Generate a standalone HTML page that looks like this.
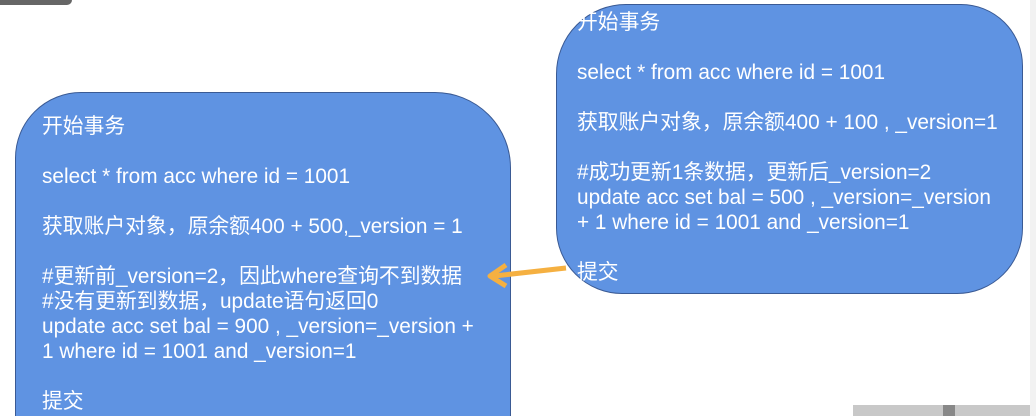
<!DOCTYPE html>
<html><head><meta charset="utf-8"><style>
html,body{margin:0;padding:0;width:1036px;height:416px;overflow:hidden;background:#fff;position:relative;font-family:"Liberation Sans","Noto Sans CJK SC",sans-serif;}
.box{position:absolute;background:#5f93e2;border:1px solid #3a5a94;color:#fff;box-sizing:border-box;}
.t{position:absolute;font-size:20.8px;line-height:25px;white-space:pre;color:#fff;}
</style></head><body>
<div style="position:absolute;left:0;top:0;width:72px;height:5px;background:#666;border-radius:0 0 8px 0"></div>
<div class="box" style="left:556px;top:4px;width:467px;height:290px;border-radius:70px 62px 66px 66px;"></div>
<div class="box" style="left:15px;top:92px;width:496px;height:340px;border-radius:66px 76px 0 0;"></div>
<div class="t" style="left:577px;top:10px">开始事务

select * from acc where id = 1001

获取账户对象，原余额400 + 100 , _version=1

#成功更新1条数据，更新后_version=2
update acc set bal = 500 , _version=_version
+ 1 where id = 1001 and _version=1

提交</div>
<div class="t" style="left:42px;top:114px">开始事务

select * from acc where id = 1001

获取账户对象，原余额400 + 500,_version = 1

#更新前_version=2，因此where查询不到数据
#没有更新到数据，update语句返回0
update acc set bal = 900 , _version=_version +
1 where id = 1001 and _version=1

提交</div>
<svg style="position:absolute;left:480px;top:258px" width="90" height="30">
<path d="M86 10 L14 18" stroke="#f5b041" stroke-width="5" fill="none"/>
<path d="M26 7 L10 18 L26 28" stroke="#f5b041" stroke-width="5" fill="none" stroke-linejoin="round"/>
</svg>
<div style="position:absolute;left:853px;top:405px;width:183px;height:11px;background:#c8c8c8"></div>
<div style="position:absolute;left:943px;top:405px;width:12px;height:11px;background:#888"></div>
<div style="position:absolute;left:1030px;top:0;width:6px;height:416px;background:#f2f2f2"></div>
</body></html>
